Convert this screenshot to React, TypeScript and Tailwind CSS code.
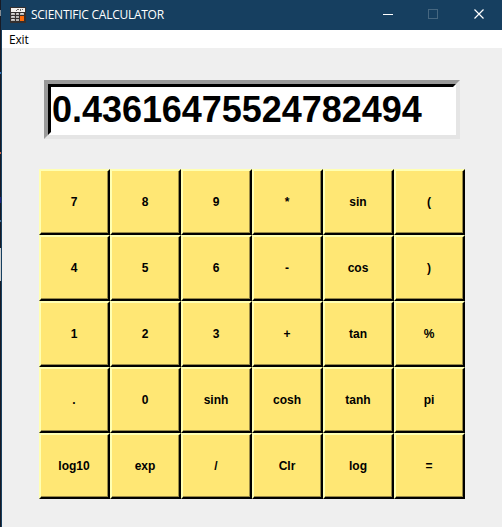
const rows: string[][] = [
  ["7", "8", "9", "*", "sin", "("],
  ["4", "5", "6", "-", "cos", ")"],
  ["1", "2", "3", "+", "tan", "%"],
  [".", "0", "sinh", "cosh", "tanh", "pi"],
  ["log10", "exp", "/", "Clr", "log", "="],
];

function CalculatorIcon() {
  return (
    <svg width="16" height="16" viewBox="0 0 16 16" shapeRendering="crispEdges" className="shrink-0">
      <rect width="16" height="16" rx="1" fill="#35302f" />
      <rect x="1" y="1" width="14" height="4" fill="#f3f1ee" />
      <path d="M7 2h2v1H7zM10 2h1v2h-1zM12 2h1v1h-1zM6 3h1v1H6z" fill="#6c6967" />
      <path d="M1 6h4v2H1zM6 6h3v2H6zM10 6h4v2h-4zM1 9h4v2H1zM6 9h3v2H6zM1 12h4v2H1zM6 12h3v2H6z" fill="#b9b7b5" />
      <path d="M2 6h2v1H2zM7 6h1v1H7zM11 6h2v1h-2zM2 9h2v1H2zM2 12h2v1H2z" fill="#dedcda" />
      <rect x="10" y="9" width="4" height="5" fill="#ff6a08" />
    </svg>
  );
}

function TitleBar() {
  return (
    <header className="flex h-[30px] items-center bg-[#163f60] pl-2 text-white">
      <CalculatorIcon />
      <h1 className="ml-[5px] whitespace-nowrap font-['Open_Sans',sans-serif] text-[12px] leading-[28px] tracking-[-0.26px]">
        SCIENTIFIC CALCULATOR
      </h1>
      <div className="mr-0.5 ml-auto flex h-full items-center">
        <svg width="138" height="30" fill="none">
          <path d="M21 14.5h10" stroke="white" />
          <rect x="66.500" y="9.500" width="9" height="9" stroke="#466780" />
          <path d="M112.500 9.500l9 9m0-9l-9 9" stroke="white" strokeWidth="1.200" />
        </svg>
      </div>
    </header>
  );
}

function Key({ label }: { label: string }) {
  return (
    <button className="border-2 border-t-[#ffffb3] border-r-black border-b-black border-l-[#ffffb3]">
      <span className="flex h-full w-full items-center justify-center border-r border-b border-[#998a46] bg-[#ffe774] pt-px font-['Liberation_Sans',sans-serif] text-[12px] font-bold leading-none text-black">
        {label}
      </span>
    </button>
  );
}

export default function App() {
  return (
    <div className="flex h-[527px] w-[502px] overflow-hidden bg-[#efefef]">
      <div className="w-px shrink-0 bg-[#171a25]">
        <div className="h-[10px]" />
        <div className="h-1.5 bg-[#858b92]" />
        <div className="mt-[56px] h-0.5 bg-[#3978bd]" />
        <div className="mt-[78px] h-0.5 bg-[#d96745]" />
        <div className="mt-[43px] h-1.5 bg-[#202080]" />
        <div className="mt-[17px] h-0.5 bg-[#497196]" />
        <div className="mt-[26px] h-[33px] bg-[#d0d0d0]" />
      </div>
      <div className="w-px shrink-0 bg-[#163f60]" />
      <main className="w-[500px] shrink-0">
        <TitleBar />
        <nav className="h-[18px] bg-white pl-[7px] font-['Open_Sans',sans-serif] text-[12px] leading-[19px] tracking-[-0.2px] text-black">
          Exit
        </nav>
        <div className="mt-8 ml-[42px] h-[59px] w-[416px] border-4 border-t-[#999999] border-r-[#e5e5e5] border-b-[#e5e5e5] border-l-[#999999]">
          <div className="h-full border-[3px] border-t-black border-r-white border-b-white border-l-black bg-white pl-px font-['Liberation_Sans',sans-serif] text-[36px] font-bold leading-[45px] tracking-[-0.04px] text-black">
            0.43616475524782494
          </div>
        </div>
        <div className="mt-[30px] ml-[37px] grid w-[426px] auto-rows-[66px] grid-cols-6">
          {rows.flat().map((label) => (
            <Key key={label} label={label} />
          ))}
        </div>
      </main>
    </div>
  );
}
